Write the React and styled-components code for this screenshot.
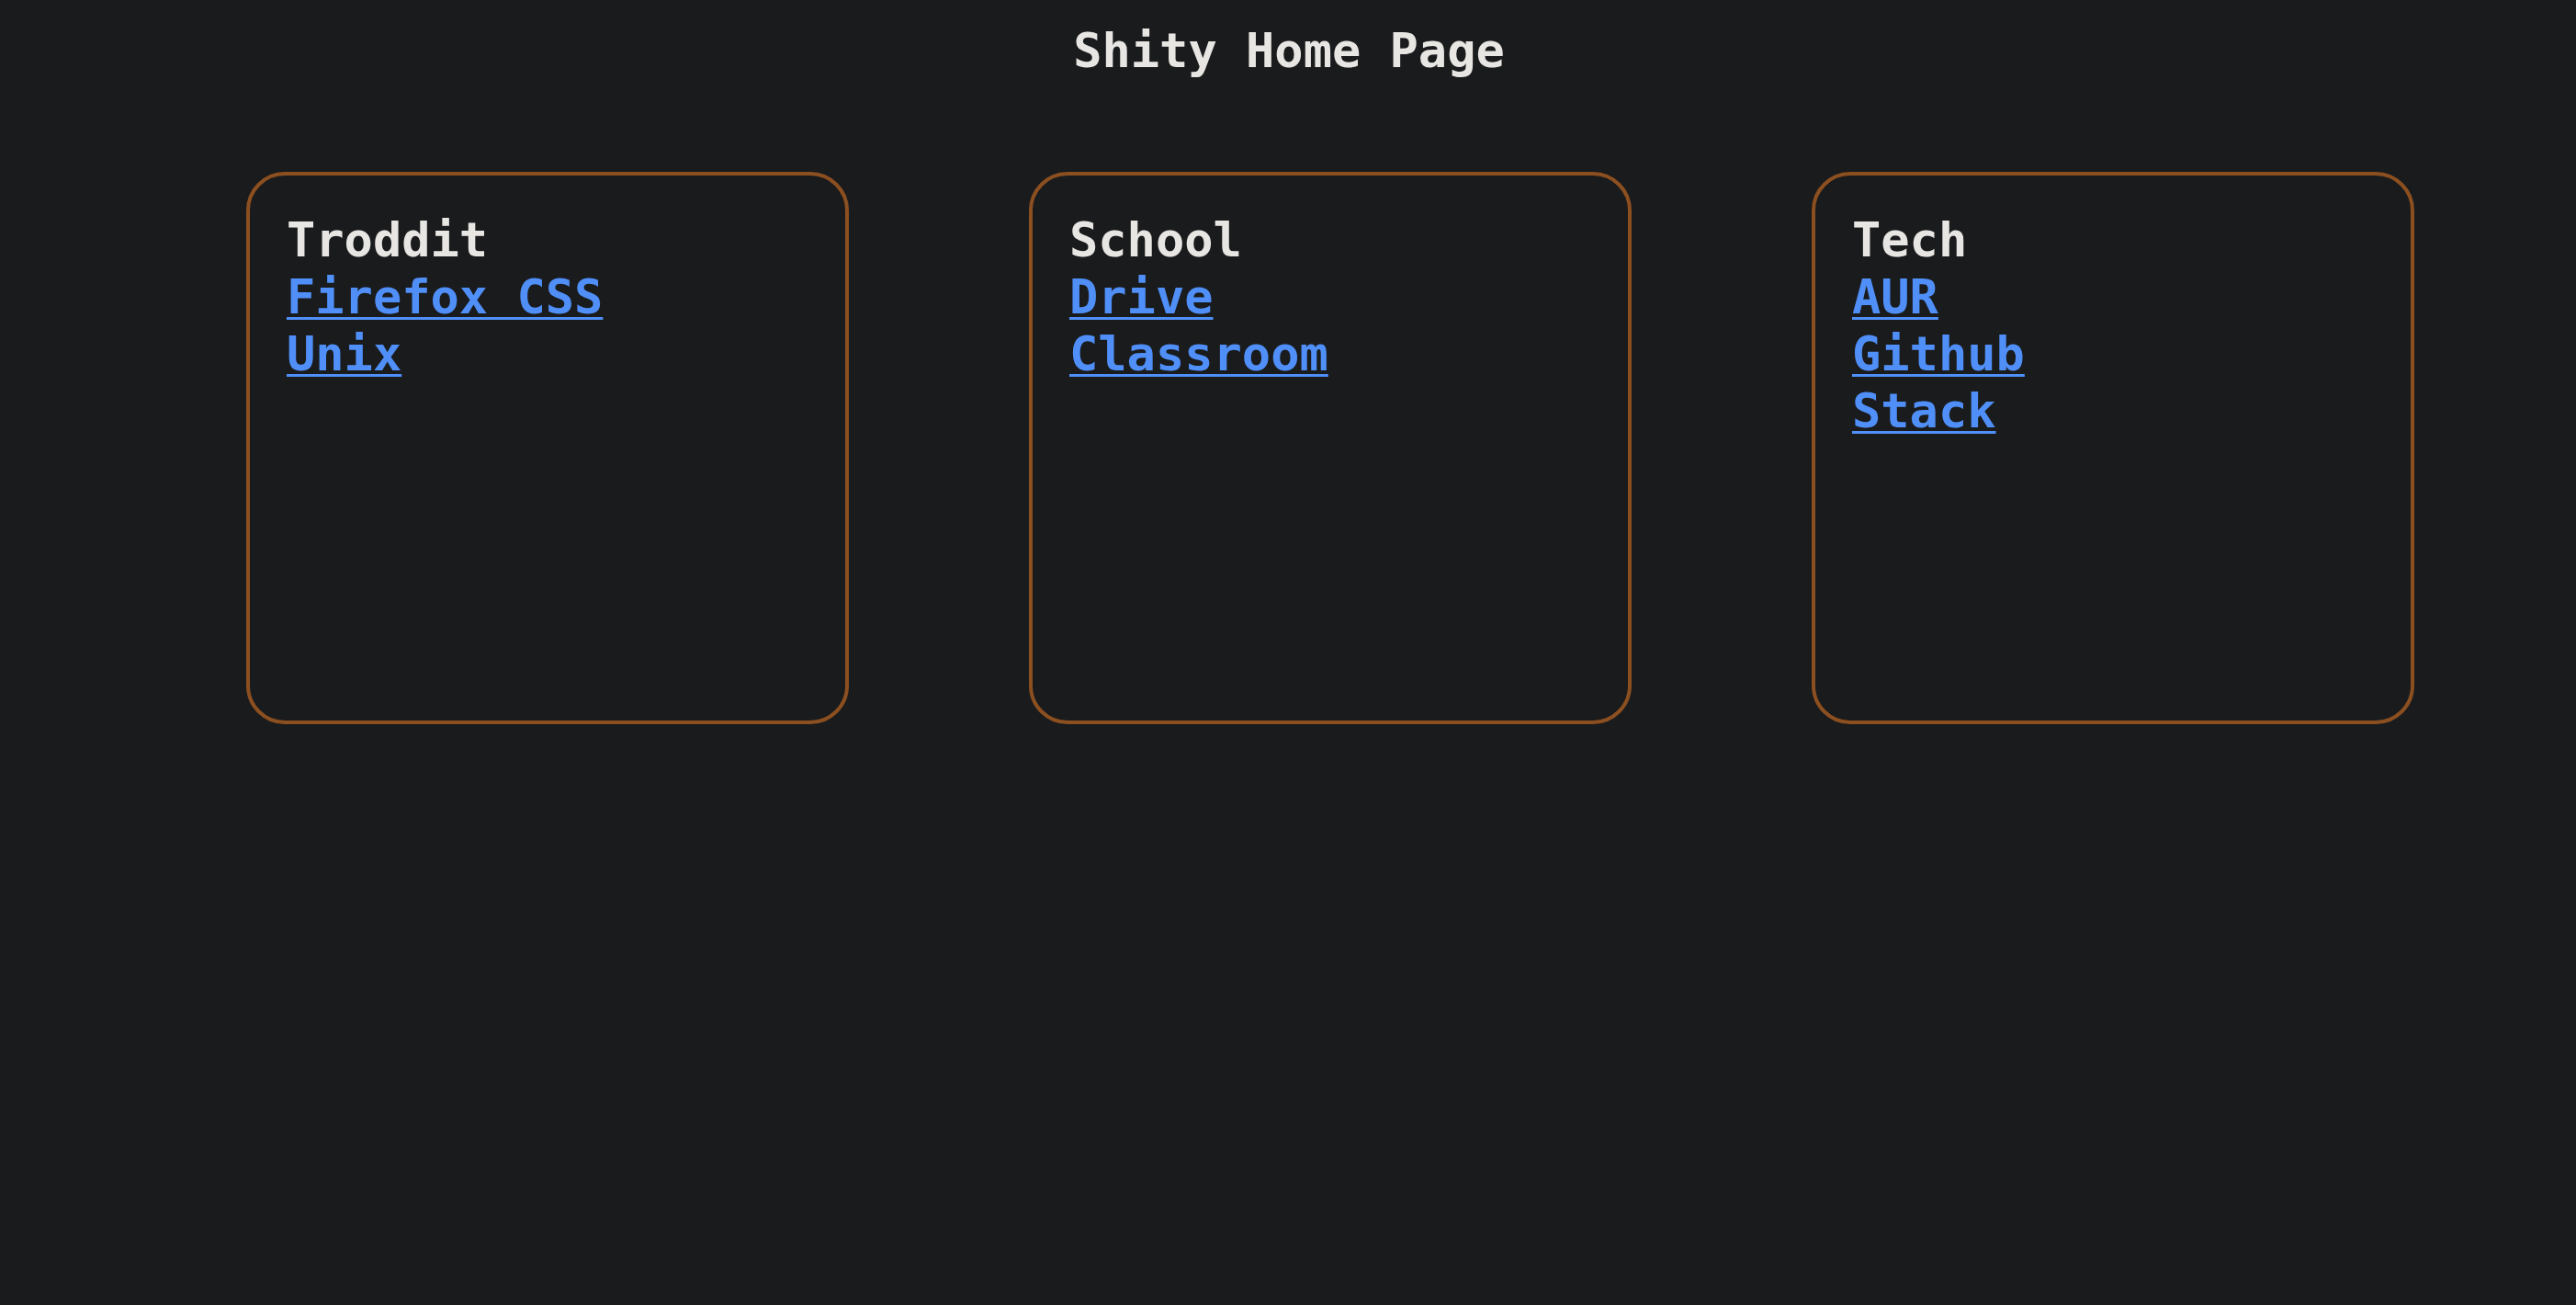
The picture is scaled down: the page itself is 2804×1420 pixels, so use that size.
import React from 'react'
import styled, { createGlobalStyle } from 'styled-components'

const GlobalStyle = createGlobalStyle`
  html, body {
    margin: 0;
    padding: 0;
    background: #1a1b1d;
    min-height: 100%;
  }
  body {
    color: #e8e6e3;
    font-family: "DejaVu Sans Mono", "Liberation Mono", monospace;
    font-weight: bold;
    font-size: 52px;
    line-height: 62px;
  }
`

const Page = styled.div`
  min-height: 1420px;
  background: #1a1b1d;
  display: flex;
  flex-direction: column;
`

const Title = styled.h1`
  margin: 24px 0 0;
  padding-left: 2px;
  font-size: 52px;
  line-height: 62px;
  text-align: center;
  font-weight: bold;
`

const Boards = styled.div`
  display: grid;
  grid-template-columns: repeat(3, 656px);
  column-gap: 196px;
  padding-left: 268px;
  margin-top: 101px;
`

const Board = styled.section`
  height: 601px;
  box-sizing: border-box;
  border: 4px solid #8b4f20;
  border-radius: 42px;
  padding: 39px 40px;
  display: flex;
  flex-direction: column;
`

const Heading = styled.div`
  color: #e8e6e3;
`

const Link = styled.a`
  color: #4f8ff7;
  text-decoration: underline;
  text-decoration-thickness: 3px;
  text-underline-offset: 4px;
  align-self: flex-start;
`

const boards = [
  { name: 'Troddit', links: ['Firefox CSS', 'Unix'] },
  { name: 'School', links: ['Drive', 'Classroom'] },
  { name: 'Tech', links: ['AUR', 'Github', 'Stack'] },
]

export default function App() {
  return (
    <Page>
      <GlobalStyle />
      <Title>Shity Home Page</Title>
      <Boards>
        {boards.map((b) => (
          <Board key={b.name}>
            <Heading>{b.name}</Heading>
            {b.links.map((l) => (
              <Link key={l} href="#">{l}</Link>
            ))}
          </Board>
        ))}
      </Boards>
    </Page>
  )
}
